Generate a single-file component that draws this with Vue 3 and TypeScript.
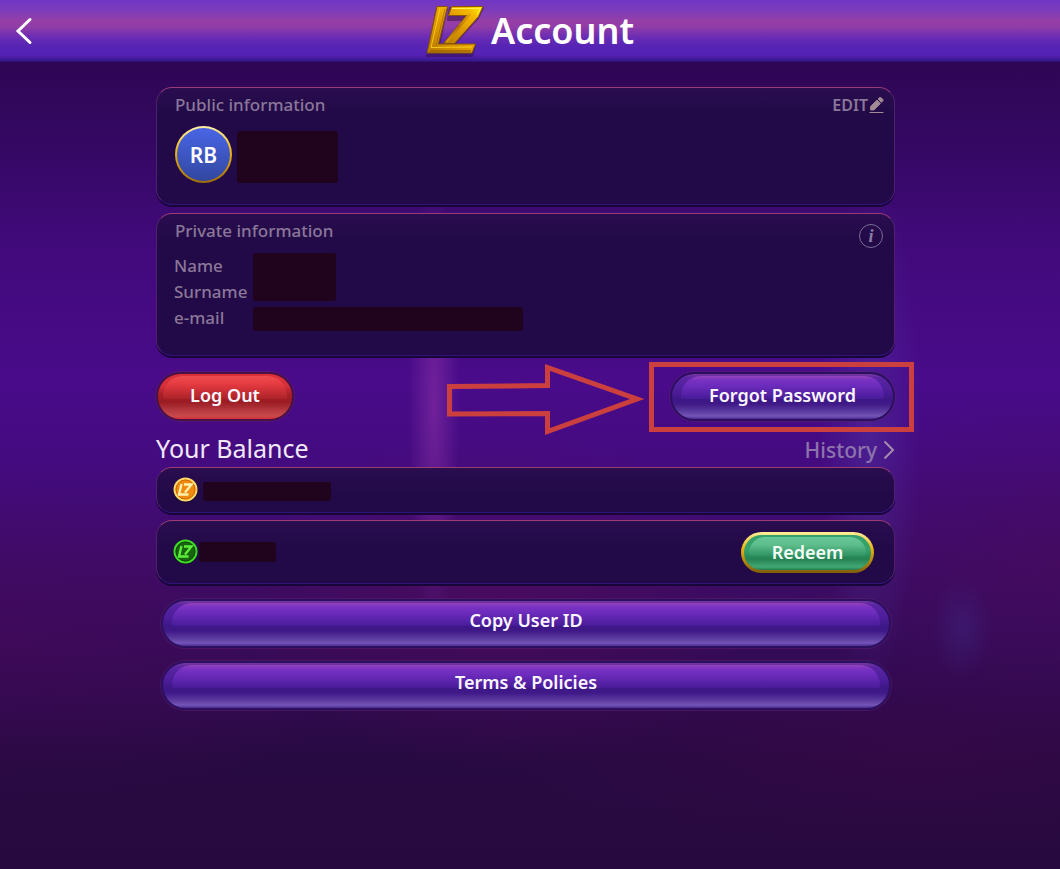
<script setup lang="ts">
const fields: string[] = ['Name', 'Surname', 'e-mail']

const links: string[] = ['Copy User ID', 'Terms & Policies']

const coins = [
  { id: 'gold', rim: '#ffd968', face: '#f08a10', edge: '#d06a00', mark: '#fff3b0', redeem: false },
  { id: 'green', rim: '#3fdc24', face: '#1b640f', edge: '#0f4a08', mark: '#5cf038', redeem: true },
]
</script>

<template>
  <div class="page">
    <header class="bar">
      <button class="back" type="button" aria-label="Back">
        <svg width="18" height="28" viewBox="0 0 18 28">
          <path d="M15 2.500 3 14l12 11.500" fill="none" stroke="#fff" stroke-width="3" stroke-linecap="round" />
        </svg>
      </button>
      <svg class="logo" width="60" height="54" viewBox="0 0 60 54" aria-hidden="true">
        <defs>
          <linearGradient id="gold" x1="0" y1="1" x2="1" y2="0">
            <stop offset="0" stop-color="#b87a00" />
            <stop offset="0.45" stop-color="#e09a00" />
            <stop offset="0.75" stop-color="#f5b800" />
            <stop offset="1" stop-color="#fff200" />
          </linearGradient>
          <linearGradient id="goldDark" x1="0" y1="0" x2="0" y2="1">
            <stop offset="0" stop-color="#e0a000" />
            <stop offset="0.5" stop-color="#b87300" />
            <stop offset="1" stop-color="#d89a00" />
          </linearGradient>
        </defs>
        <g fill="#2c0d33" opacity="0.45" stroke="#2c0d33" stroke-width="2" stroke-linejoin="round">
          <path d="M11 4h10L13 41h36l-3 11H1z" />
          <path d="M24 4h33l-5 10-24 26H18l22-24H22z" />
        </g>
        <g stroke="#8a5600" stroke-linejoin="round">
          <path d="M11 2.500h10.500L12.500 40h37l-3.500 9H1z" fill="url(#gold)" />
          <path d="M25.500 2.500h31.500l-4.500 10L28.500 39.500H17.500L40.500 11.500H22.500z" fill="url(#gold)" />
        </g>
        <path d="M14 4.500 5 43.500 46 43" fill="none" stroke="#ffd820" opacity="0.8" />
        <path d="M19 5 10 42" fill="none" stroke="#a86b00" opacity="0.8" />
        <path d="M26 4.500h28.500L51 11" fill="none" stroke="#fff04a" />
        <path d="M44 10 20.500 38" fill="none" stroke="url(#goldDark)" stroke-width="2" />
        <path d="M4 47h41" stroke="#9c6400" stroke-width="1.500" />
      </svg>
      <h1>Account</h1>
    </header>

    <main>
      <section class="card public">
        <div class="card-head">
          <h2>Public information</h2>
          <button class="edit" type="button">
            EDIT
            <svg width="15" height="16" viewBox="0 0 15 16" aria-hidden="true">
              <path d="M1.500 13V9.500L8 3l3.500 3.500L5 13zM9 2l1.300-1.300c.6-.6 1.300-.6 1.900 0l1.500 1.500c.6.600.6 1.300 0 1.900L12.400 5.400z" fill="#a28a94" stroke="#a28a94" stroke-width="0.800" />
              <path d="M.5 15.500h14" stroke="#a28a94" />
            </svg>
          </button>
        </div>
        <div class="profile">
          <span class="avatar">RB</span>
          <span class="mask nick"></span>
        </div>
      </section>

      <section class="card private">
        <div class="card-head">
          <h2>Private information</h2>
          <button class="info" type="button" aria-label="About private information">i</button>
        </div>
        <div class="details">
          <dl>
            <dt v-for="field in fields" :key="field">{{ field }}</dt>
          </dl>
          <div class="masks">
            <span class="mask names"></span>
            <span class="mask mail"></span>
          </div>
        </div>
      </section>

      <div class="actions">
        <button class="pill red logout" type="button"><span>Log Out</span></button>
        <div class="target">
          <button class="pill forgot" type="button"><span>Forgot Password</span></button>
          <svg class="arrow" width="200" height="76" viewBox="0 0 200 76" aria-hidden="true">
            <path d="M4.500 25.500 102.500 24.500V6.500L192 38 102.500 70.500V52.500L4.500 53z" fill="none" stroke="#cb403f" stroke-width="5" stroke-miterlimit="10" />
          </svg>
          <span class="frame"></span>
        </div>
      </div>

      <div class="balance-head">
        <h3>Your Balance</h3>
        <a href="#history">
          History
          <svg width="12" height="20" viewBox="0 0 12 20" aria-hidden="true">
            <path d="M1.500 1.500 10 10l-8.500 8.500" fill="none" stroke="#a48cae" stroke-width="2" />
          </svg>
        </a>
      </div>

      <section v-for="coin in coins" :key="coin.id" class="card balance" :class="coin.id">
        <svg width="25" height="26" viewBox="0 0 25 26" aria-hidden="true">
          <circle cx="12.500" cy="13.500" r="12" fill="#12062e" />
          <circle cx="12.500" cy="12.500" r="11" :fill="coin.face" :stroke="coin.rim" stroke-width="2" />
          <circle cx="12.500" cy="12.500" r="9.500" fill="none" :stroke="coin.edge" />
          <path d="M8.500 7 6 17.500h9.500M11 7.500h7.500l-6.500 8" fill="none" :stroke="coin.mark" stroke-width="2.300" />
        </svg>
        <span class="mask amount"></span>
        <button v-if="coin.redeem" class="redeem" type="button"><span>Redeem</span></button>
      </section>

      <nav class="links">
        <button v-for="link in links" :key="link" class="pill" type="button"><span>{{ link }}</span></button>
      </nav>
    </main>
  </div>
</template>

<style>
body {
  background: #2a0943;
}
</style>

<style scoped>
.page {
  box-sizing: border-box;
  min-height: 100vh;
  font-family: "Noto Sans", "Open Sans", sans-serif;
  font-weight: 500;
  color: #8a7799;
  background:
    radial-gradient(ellipse 26px 230px at 434px 405px, rgba(140, 48, 165, 0.6), rgba(120, 40, 160, 0.35) 55%, transparent),
    radial-gradient(ellipse 50px 260px at 870px 430px, rgba(80, 55, 165, 0.45), transparent),
    radial-gradient(ellipse 30px 50px at 962px 628px, rgba(60, 40, 130, 0.45), transparent),
    radial-gradient(ellipse 260px 170px at 500px 600px, rgba(95, 10, 90, 0.4), transparent),
    radial-gradient(ellipse 420px 160px at 0 640px, rgba(80, 8, 90, 0.35), transparent),
    radial-gradient(ellipse 280px 170px at 100% 560px, rgba(75, 10, 90, 0.5), transparent),
    radial-gradient(ellipse 420px 100px at 920px 750px, rgba(75, 5, 75, 0.3), transparent),
    linear-gradient(#2e0655 62px, #340862 140px, #420a7c 250px, #490b8a 380px, #440b80 460px, #3d0c68 560px, #300a50 690px, #280a42 760px, #28093f 100%);
}

button {
  padding: 0;
  border: 0;
  background: none;
  color: inherit;
  font: inherit;
  cursor: pointer;
}

h1,
h2,
h3,
dl {
  margin: 0;
  font-weight: 500;
}

.bar {
  display: grid;
  grid-template-columns: 1fr auto auto 1fr;
  align-items: center;
  height: 62px;
  background: linear-gradient(#7036c4, #7b3dbb 10px, #963ea8 21px, #903ca8 27px, #6b2cb4 37px, #5624b5 46px, #5421b5 55px, #35188a 61px, #241060 62px);
}

.back {
  justify-self: start;
  margin-left: 15px;
  display: flex;
}

.logo {
  margin-right: 5px;
}

h1 {
  color: #fff;
  font-size: 36px;
  line-height: 62px;
  font-weight: 600;
}

main {
  display: flex;
  flex-direction: column;
  padding: 25px 165px 24px 156px;
}

.card {
  box-sizing: border-box;
  border: 1px solid;
  border-color: #9b3d75 #50206e #301377 #50206e;
  border-radius: 16px;
  background: linear-gradient(#2a0d4f, #220a48 25px, #210a47);
  box-shadow: 0 2px 0 #180638;
}

.card + .card {
  margin-top: 8px;
}

.card-head {
  display: flex;
  justify-content: space-between;
  align-items: flex-start;
  padding: 6px 10px 0 18px;
}

h2,
dt {
  font-size: 17px;
  line-height: 22px;
}

.public {
  height: 118px;
}

.edit {
  display: flex;
  align-items: center;
  gap: 1px;
  font-size: 16px;
  line-height: 22px;
  font-weight: 600;
}

.profile {
  display: flex;
  align-items: center;
  gap: 5px;
  padding: 10px 18px;
}

.avatar {
  box-sizing: border-box;
  width: 57px;
  height: 57px;
  border: 2px solid transparent;
  border-radius: 50%;
  background:
    linear-gradient(#4965e6, #3247a0) padding-box,
    linear-gradient(#fff0a8, #efb512 45%, #a06d05) border-box;
  color: #fff;
  font-size: 21px;
  line-height: 54px;
  font-weight: 600;
  text-align: center;
}

.mask {
  border-radius: 3px;
  background: #20041d;
}

.nick {
  width: 101px;
  height: 52px;
  margin-top: 4px;
}

.private {
  height: 143px;
}

.info {
  box-sizing: border-box;
  width: 24px;
  height: 24px;
  margin: 4px 1px 0 0;
  border: 1px solid #7b6d97;
  border-radius: 50%;
  color: #8a7da2;
  font: italic bold 18px/20px "Liberation Serif", serif;
}

.details {
  display: flex;
  padding: 5px 17px;
}

dl {
  width: 79px;
}

dt {
  line-height: 26px;
}

.masks {
  display: flex;
  flex-direction: column;
  gap: 6px;
}

.names {
  width: 83px;
  height: 48px;
}

.mail {
  width: 270px;
  height: 24px;
}

.actions {
  display: flex;
  justify-content: space-between;
  padding-top: 16px;
}

.pill {
  position: relative;
  box-sizing: border-box;
  height: 49px;
  padding-bottom: 4px;
  border: 2px solid #2c1060;
  border-radius: 25px;
  background: linear-gradient(#76369f, #5a25a4 4px, #4b1c98 18px, #3e1786 25px, #3f1988 30px, #6343a5 39px, #7455b8 42px, #4e2b94 45px);
  box-shadow: 0 0 1px 1px rgba(100, 34, 112, 0.5);
  color: #fbf6ff;
  font-size: 18px;
  font-weight: 600;
  line-height: 26px;
}

.pill::before {
  content: "";
  position: absolute;
  inset: 2px 9px 20px;
  border-radius: 20px 20px 2px 2px;
  background: linear-gradient(#9443b8, #7932c3 4px, #6b2bbb 10px, #481b98);
}

.pill span,
.redeem span {
  position: relative;
  display: block;
}

.logout {
  width: 138px;
}

.red {
  border-color: #4a1145;
  background: linear-gradient(#dc3039, #d6303a 12px, #aa2027 20px, #9b1c23 28px, #b83b42 37px, #c9494c 42px, #d92e34 45px);
}

.red::before {
  inset: 2px 5px 20px;
  background: linear-gradient(#ef4c4f, #e53b41 8px, #ac2229);
}

.target {
  position: relative;
}

.forgot {
  width: 225px;
}

.frame {
  position: absolute;
  inset: -10px -19px -11px -21px;
  border: 5px solid #cb403f;
  pointer-events: none;
}

.arrow {
  position: absolute;
  top: -11px;
  right: 250px;
}

.balance-head {
  display: flex;
  justify-content: space-between;
  align-items: center;
  height: 46px;
}

h3 {
  color: #f1e9f8;
  font-size: 25px;
  line-height: 30px;
  font-weight: 400;
  padding-top: 8px;
}

.balance-head a {
  display: flex;
  align-items: center;
  gap: 6px;
  padding-top: 12px;
  color: #8d74ab;
  font-size: 21px;
  line-height: 26px;
  text-decoration: none;
}

.balance {
  display: flex;
  align-items: center;
  height: 46px;
  padding: 0 20px 0 16px;
}

.card.green {
  height: 64px;
  margin-top: 7px;
}

.gold .amount {
  width: 128px;
  height: 19px;
  margin: 3px 0 0 5px;
}

.green .amount {
  width: 77px;
  height: 20px;
  margin-left: 1px;
}

.redeem {
  position: relative;
  box-sizing: border-box;
  width: 133px;
  height: 41px;
  margin-left: auto;
  border: 3px solid transparent;
  border-radius: 21px;
  background:
    linear-gradient(#36a26c, #35a16a 15px, #258253 24px, #42a875 32px, #237b4e) padding-box,
    linear-gradient(#fff09a, #e9b314 40%, #805d0a) border-box;
  color: #f4fff8;
  font-size: 18px;
  font-weight: 600;
  line-height: 35px;
}

.redeem::before {
  content: "";
  position: absolute;
  inset: 2px 5px 14px;
  border-radius: 16px 16px 2px 2px;
  background: linear-gradient(#69c797, #5dbd8b 8px, #2f9262);
}

.links {
  display: flex;
  flex-direction: column;
  gap: 13px;
  padding: 15px 4px 0 5px;
}

.links .pill {
  padding-bottom: 8px;
}
</style>
